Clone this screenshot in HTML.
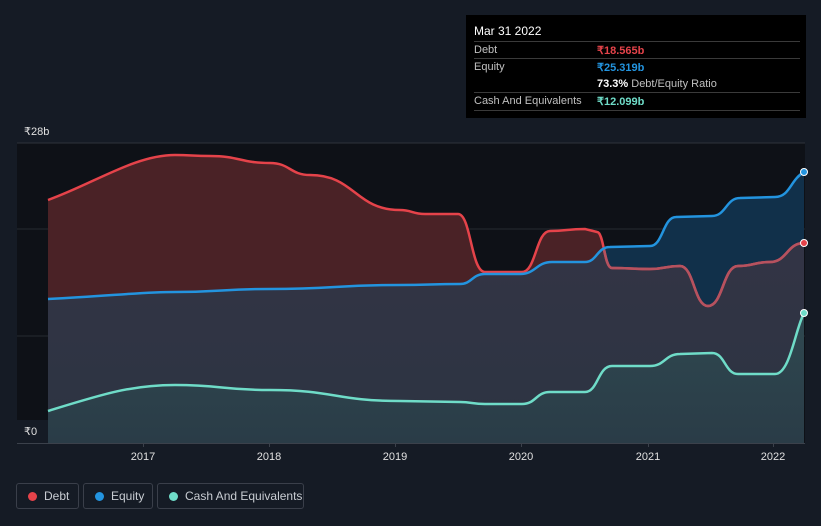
<!DOCTYPE html>
<html><head><meta charset="utf-8"><style>
body{margin:0;background:#151b25;width:821px;height:526px;overflow:hidden;font-family:"Liberation Sans",sans-serif;position:relative}
.tt{position:absolute;left:466px;top:15px;width:340px;height:103px;background:#000;color:#c0c0c0;font-size:11px}
.tt .t{position:absolute;left:8px;top:9px;color:#fff;font-size:12px}
.ln{position:absolute;left:8px;width:326px;height:1px;background:#3a3a3a}
.r{position:absolute;left:8px}
.v{position:absolute;left:131px;font-weight:bold}
.leg{position:absolute;top:483px;height:26px;border:1px solid #3a3f4a;border-radius:3px;box-sizing:border-box;color:#c8ccd2;font-size:12px;line-height:24px;padding-left:27px}
.leg i{position:absolute;left:11px;top:8px;width:9px;height:9px;border-radius:50%}
</style></head><body>
<svg width="821" height="526" style="position:absolute;left:0;top:0">
<defs>
<clipPath id="cd"><path d="M48,200 C95,183 135,155 175,155 C192,155 192,156 210,156 C240,156 240,163 270,163 C290,163 290,175 310,175 C355,175 355,210 400,210 C412,210 412,214 425,214 L458,214 C471,214 471,272 485,272 L522,272 C536,272 536,231 550,231 C567,231 567,229 585,229 L597,232 C604,232 604,268 612,268 C631,268 631,269 650,269 C665,269 665,266 680,266 C694,266 694,306 708,306 C723,306 723,266 738,266 C754,266 754,262 770,262 C787,262 787,243 804,243 L804,443 L48,443Z"/></clipPath>
<clipPath id="ce"><path d="M48,299 C111,296 140,292 175,292 C222,292 222,289 270,289 C335,289 335,285 400,285 C430,285 430,284 460,284 C472,284 472,274 485,274 L520,274 C536,274 536,262 552,262 L585,262 C597,262 597,247 610,247 L650,246 C663,246 663,217 676,217 L712,216 C726,216 726,198 740,198 L775,197 C790,197 790,180 804,172 L804,443 L48,443Z"/></clipPath>
<linearGradient id="gp" x1="0" y1="0" x2="0" y2="1"><stop offset="0" stop-color="#3b3349"/><stop offset="1" stop-color="#2c3442"/></linearGradient>
<linearGradient id="gc" x1="0" y1="0" x2="0" y2="1"><stop offset="0" stop-color="#2f4850"/><stop offset="1" stop-color="#2a3c47"/></linearGradient>
</defs>
<rect x="17" y="143" width="788" height="300" fill="#0e1117"/>
<line x1="17" y1="143" x2="805" y2="143" stroke="#2e333b"/>
<line x1="17" y1="229" x2="805" y2="229" stroke="#262a31"/>
<line x1="17" y1="336" x2="805" y2="336" stroke="#262a31"/>
<rect x="0" y="0" width="821" height="443" fill="#4a2226" clip-path="url(#cd)"/>
<rect x="0" y="0" width="821" height="443" fill="#11304a" clip-path="url(#ce)"/>
<g clip-path="url(#cd)"><rect x="0" y="0" width="821" height="443" fill="url(#gp)" clip-path="url(#ce)"/></g>
<path d="M48,411 C100,395 130,385 175,385 C222,385 222,390 270,390 C335,390 335,401 400,401 L460,402 C472,402 472,404 485,404 L522,404 C536,404 536,392 550,392 L585,392 C598,392 598,366 612,366 L650,366 C665,366 665,354 680,354 L712,353 C725,353 725,374 738,374 L775,374 C790,374 795,330 804,313 L804,443 L48,443Z" fill="url(#gc)"/>
<path d="M48,200 C95,183 135,155 175,155 C192,155 192,156 210,156 C240,156 240,163 270,163 C290,163 290,175 310,175 C355,175 355,210 400,210 C412,210 412,214 425,214 L458,214 C471,214 471,272 485,272 L522,272 C536,272 536,231 550,231 C567,231 567,229 585,229 L597,232 C604,232 604,268 612,268 C631,268 631,269 650,269 C665,269 665,266 680,266 C694,266 694,306 708,306 C723,306 723,266 738,266 C754,266 754,262 770,262 C787,262 787,243 804,243" fill="none" stroke="#e5434a" stroke-width="2.5"/>
<path clip-path="url(#ce)" d="M48,200 C95,183 135,155 175,155 C192,155 192,156 210,156 C240,156 240,163 270,163 C290,163 290,175 310,175 C355,175 355,210 400,210 C412,210 412,214 425,214 L458,214 C471,214 471,272 485,272 L522,272 C536,272 536,231 550,231 C567,231 567,229 585,229 L597,232 C604,232 604,268 612,268 C631,268 631,269 650,269 C665,269 665,266 680,266 C694,266 694,306 708,306 C723,306 723,266 738,266 C754,266 754,262 770,262 C787,262 787,243 804,243" fill="none" stroke="#b6525f" stroke-width="2.6"/>
<path d="M48,299 C111,296 140,292 175,292 C222,292 222,289 270,289 C335,289 335,285 400,285 C430,285 430,284 460,284 C472,284 472,274 485,274 L520,274 C536,274 536,262 552,262 L585,262 C597,262 597,247 610,247 L650,246 C663,246 663,217 676,217 L712,216 C726,216 726,198 740,198 L775,197 C790,197 790,180 804,172" fill="none" stroke="#2394df" stroke-width="2.5"/>
<path d="M48,411 C100,395 130,385 175,385 C222,385 222,390 270,390 C335,390 335,401 400,401 L460,402 C472,402 472,404 485,404 L522,404 C536,404 536,392 550,392 L585,392 C598,392 598,366 612,366 L650,366 C665,366 665,354 680,354 L712,353 C725,353 725,374 738,374 L775,374 C790,374 795,330 804,313" fill="none" stroke="#6fdcc8" stroke-width="2.5"/>
<circle cx="804" cy="172" r="3.5" fill="#2394df" stroke="#fff" stroke-width="1"/>
<circle cx="804" cy="243" r="3.5" fill="#e5434a" stroke="#fff" stroke-width="1"/>
<circle cx="804" cy="313" r="3.5" fill="#6fdcc8" stroke="#fff" stroke-width="1"/>
<rect x="17" y="420" width="31" height="23" fill="#151b25"/>
<line x1="17" y1="443.5" x2="805" y2="443.5" stroke="#3b414b"/>
<g stroke="#3b414b"><line x1="143.5" y1="443" x2="143.5" y2="447"/><line x1="269.5" y1="443" x2="269.5" y2="447"/><line x1="395.5" y1="443" x2="395.5" y2="447"/><line x1="521.5" y1="443" x2="521.5" y2="447"/><line x1="648.5" y1="443" x2="648.5" y2="447"/><line x1="773.5" y1="443" x2="773.5" y2="447"/></g>
<g font-family="Liberation Sans,sans-serif" font-size="11" fill="#e0e0e0" text-anchor="middle"><text x="143" y="460">2017</text><text x="269" y="460">2018</text><text x="395" y="460">2019</text><text x="521" y="460">2020</text><text x="648" y="460">2021</text><text x="773" y="460">2022</text></g>
<g font-family="Liberation Sans,sans-serif" font-size="11" fill="#e0e0e0"><text x="24" y="135">₹28b</text><text x="24" y="435">₹0</text></g>
</svg>
<div class="tt"><div class="t">Mar 31 2022</div>
<div class="ln" style="top:26px"></div>
<div class="r" style="top:29px">Debt</div><div class="v" style="top:29px;color:#e5434a">₹18.565b</div>
<div class="ln" style="top:43px"></div>
<div class="r" style="top:46px">Equity</div><div class="v" style="top:46px;color:#2394df">₹25.319b</div>
<div class="v" style="top:63px;color:#fff">73.3% <span style="font-weight:normal;color:#c0c0c0">Debt/Equity Ratio</span></div>
<div class="ln" style="top:77px"></div>
<div class="r" style="top:80px">Cash And Equivalents</div><div class="v" style="top:80px;color:#6fdcc8">₹12.099b</div>
<div class="ln" style="top:95px"></div>
</div>
<div class="leg" style="left:16px;width:63px"><i style="background:#e5434a"></i>Debt</div>
<div class="leg" style="left:83px;width:70px"><i style="background:#2394df"></i>Equity</div>
<div class="leg" style="left:157px;width:147px"><i style="background:#6fdcc8"></i>Cash And Equivalents</div>
</body></html>
